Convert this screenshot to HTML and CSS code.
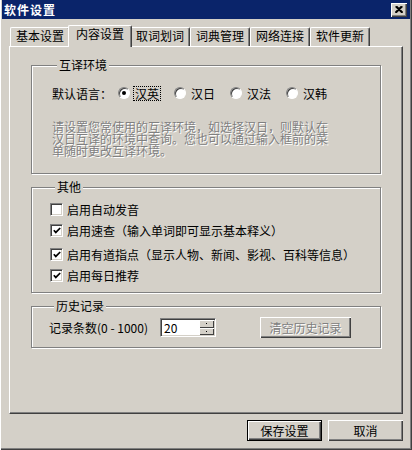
FILE: index.html
```html
<!DOCTYPE html>
<html lang="zh-CN">
<head>
  <meta charset="UTF-8" />
  <title>软件设置</title>
  <link rel="stylesheet" href="styles.css">
</head>
<body>

  <div class="window">

    <!-- Barra de título -->
    <div class="titlebar">
      <span class="title">软件设置</span>
      <button class="close-btn" title="关闭">
        <svg width="8" height="7" viewBox="0 0 8 7">
          <path d="M0.5 0.5 L7 7 M1.5 0 L8 6.5 M6.5 0 L0 6.5 M7.5 0.5 L1 7" stroke="#000" stroke-width="1.1" fill="none" />
        </svg>
      </button>
    </div>

    <!-- Abas -->
    <div class="tabs">
      <div class="tab">基本设置</div>
      <div class="tab tab-active">内容设置</div>
      <div class="tab">取词划词</div>
      <div class="tab">词典管理</div>
      <div class="tab">网络连接</div>
      <div class="tab">软件更新</div>
    </div>

    <div class="panel">

      <fieldset class="group group-lang">
        <legend>互译环境</legend>
        <div class="lang-row">
          <span class="lang-label">默认语言：</span>
          <label class="radio"><span class="radio-dot checked"></span><span class="radio-text focused">汉英</span></label>
          <label class="radio"><span class="radio-dot"></span><span class="radio-text">汉日</span></label>
          <label class="radio"><span class="radio-dot"></span><span class="radio-text">汉法</span></label>
          <label class="radio"><span class="radio-dot"></span><span class="radio-text">汉韩</span></label>
        </div>
        <p class="hint">请设置您常使用的互译环境，如选择汉日，则默认在汉日互译的环境中查询。您也可以通过输入框前的菜单随时更改互译环境。</p>
      </fieldset>

      <fieldset class="group group-misc">
        <legend>其他</legend>
        <div class="check">
          <span class="check-box"></span>
          <span>启用自动发音</span>
        </div>
        <div class="check">
          <span class="check-box"><svg width="8" height="7" viewBox="0 0 8 7"><polyline points="0.8,3.2 2.8,5.4 7.2,1" stroke="#000" stroke-width="1.7" fill="none" /></svg></span>
          <span>启用速查（输入单词即可显示基本释义）</span>
        </div>
        <div class="check check-wide">
          <span class="check-box"><svg width="8" height="7" viewBox="0 0 8 7"><polyline points="0.8,3.2 2.8,5.4 7.2,1" stroke="#000" stroke-width="1.7" fill="none" /></svg></span>
          <span>启用有道指点（显示人物、新闻、影视、百科等信息）</span>
        </div>
        <div class="check">
          <span class="check-box"><svg width="8" height="7" viewBox="0 0 8 7"><polyline points="0.8,3.2 2.8,5.4 7.2,1" stroke="#000" stroke-width="1.7" fill="none" /></svg></span>
          <span>启用每日推荐</span>
        </div>
      </fieldset>

      <fieldset class="group group-history">
        <legend>历史记录</legend>
        <div class="history-row">
          <span class="history-label">记录条数(0 - 1000)</span>
          <div class="spin">
            <span class="spin-value">20</span>
            <div class="spin-btns">
              <span class="spin-btn"></span>
              <span class="spin-btn"></span>
            </div>
          </div>
          <button class="btn btn-disabled" disabled>清空历史记录</button>
        </div>
      </fieldset>

    </div>

    <div class="footer">
      <button class="btn btn-default">保存设置</button>
      <button class="btn">取消</button>
    </div>

  </div>

</body>
</html>
```

FILE: styles.css
```css
body {
  margin: 0;
  background-color: #d4d0c8;
  font-family: "Noto Sans CJK SC", sans-serif;
  font-size: 12px;
  color: #000;
}

.window {
  box-sizing: border-box;
  width: 412px;
  height: 450px;
  padding: 0 2px 2px 2px;
  background: #d4d0c8;
  box-shadow: inset 1px 0 #fff, inset -1px -1px #404040, inset -2px -2px #808080;
}

.titlebar {
  display: flex;
  align-items: center;
  justify-content: space-between;
  height: 19px;
  padding: 0 3px 0 2px;
  background-color: #0a246a;
}

.title {
  color: #fff;
  font-weight: bold;
  letter-spacing: 1px;
  line-height: 14px;
}

.close-btn {
  display: flex;
  align-items: center;
  justify-content: center;
  width: 16px;
  height: 14px;
  padding: 0;
  border: none;
  background: #d4d0c8;
  box-shadow: inset 1px 1px #fff, inset -1px -1px #404040, inset -2px -2px #808080;
}

/* abas */
.tabs {
  display: flex;
  align-items: flex-end;
  height: 21px;
  margin-top: 6px;
  padding-left: 8px;
}

.tab {
  box-sizing: border-box;
  width: 60px;
  height: 19px;
  line-height: 16px;
  text-align: center;
  border-top: 1px solid #fff;
  border-left: 1px solid #fff;
  border-right: 1px solid #404040;
  border-radius: 2px 2px 0 0;
  box-shadow: inset -1px 0 #808080;
  background: #d4d0c8;
}

.tab-active {
  position: relative;
  z-index: 1;
  width: 64px;
  height: 22px;
  margin: 0 -2px -1px -2px;
  line-height: 16px;
}

.panel {
  box-sizing: border-box;
  height: 368px;
  margin: 0 7px;
  padding: 11px 0 0 21px;
  border-top: 1px solid #fff;
  border-left: 1px solid #fff;
  border-right: 1px solid #404040;
  border-bottom: 1px solid #404040;
  box-shadow: inset -1px -1px #808080;
}

/* grupos */
.group {
  box-sizing: border-box;
  width: 350px;
  min-width: 0;
  margin: 0;
  padding: 0;
  border: 1px solid #808080;
  box-shadow: inset 1px 1px #fff, 1px 1px #fff;
}

.group + .group {
  margin-top: 6px;
}

.group legend {
  margin-left: 5px;
  padding: 0 2px;
  line-height: 14px;
  background: #d4d0c8;
}

.group-lang {
  padding: 0 0 16px 20px;
}

.group-misc {
  padding: 0 0 10px 18px;
}

.group-history {
  padding: 0 0 9px 17px;
}

.lang-row {
  display: flex;
  align-items: center;
  height: 16px;
  margin-top: 13px;
}

.lang-label {
  margin-right: 6px;
}

.radio {
  display: flex;
  align-items: center;
  gap: 3px;
  width: 56px;
}

.radio-dot {
  box-sizing: border-box;
  position: relative;
  width: 12px;
  height: 12px;
  border-radius: 50%;
  border: 1px solid;
  border-color: #808080 #fff #fff #808080;
  background: #fff;
  box-shadow: inset 1px 1px #404040;
}

.radio-dot.checked::after {
  content: "";
  position: absolute;
  left: 3px;
  top: 3px;
  width: 4px;
  height: 4px;
  border-radius: 50%;
  background: #000;
}

.radio-text {
  padding: 0 1px;
  line-height: 13px;
  border: 1px dotted transparent;
}

.radio-text.focused {
  border-color: #000;
}

.hint {
  width: 282px;
  margin: 20px 0 0 0;
  line-height: 12px;
  color: #808080;
  text-shadow: 1px 1px 0 #fff;
}

/* caixas de seleção */
.check {
  display: flex;
  align-items: center;
  gap: 4px;
  height: 14px;
  margin-top: 7px;
  white-space: nowrap;
}

.check:first-of-type {
  margin-top: 8px;
}

.check-wide {
  margin-top: 10px;
}

.check-box {
  box-sizing: border-box;
  display: flex;
  align-items: center;
  justify-content: center;
  width: 13px;
  height: 13px;
  border: 1px solid;
  border-color: #808080 #fff #fff #808080;
  background: #fff;
  box-shadow: inset 1px 1px #404040, inset -1px -1px #d4d0c8;
}

/* histórico */
.history-row {
  display: flex;
  align-items: center;
  height: 21px;
  margin-top: 4px;
}

.history-label {
  width: 111px;
  white-space: nowrap;
}

.spin {
  box-sizing: border-box;
  display: flex;
  justify-content: space-between;
  width: 56px;
  height: 19px;
  padding: 2px;
  border: 1px solid;
  border-color: #808080 #fff #fff #808080;
  background: #fff;
  box-shadow: inset 1px 1px #404040, inset -1px -1px #d4d0c8;
}

.spin-value {
  padding-left: 1px;
  line-height: 14px;
}

.spin-btns {
  display: flex;
  flex-direction: column;
  width: 15px;
  margin: -1px -1px -1px 0;
}

.spin-btn {
  position: relative;
  flex: 1;
  background: #d4d0c8;
  box-shadow: inset 1px 1px #fff, inset -1px -1px #404040;
}

.spin-btn::after {
  content: "";
  position: absolute;
  left: 7px;
  top: 3px;
  width: 1px;
  height: 1px;
  background: #000;
}

/* botões */
.btn {
  box-sizing: border-box;
  width: 75px;
  height: 21px;
  padding: 0;
  font-family: "Noto Sans CJK SC", sans-serif;
  font-size: 12px;
  color: #000;
  border: none;
  background: #d4d0c8;
  box-shadow: inset 1px 1px #fff, inset -1px -1px #404040, inset -2px -2px #808080;
}

.btn-default {
  border: 1px solid #000;
}

.btn-disabled {
  width: 91px;
  margin-left: 44px;
  color: #808080;
  text-shadow: 1px 1px 0 #fff;
}

.footer {
  display: flex;
  justify-content: flex-end;
  gap: 6px;
  margin-top: 6px;
  padding-right: 7px;
}
```
